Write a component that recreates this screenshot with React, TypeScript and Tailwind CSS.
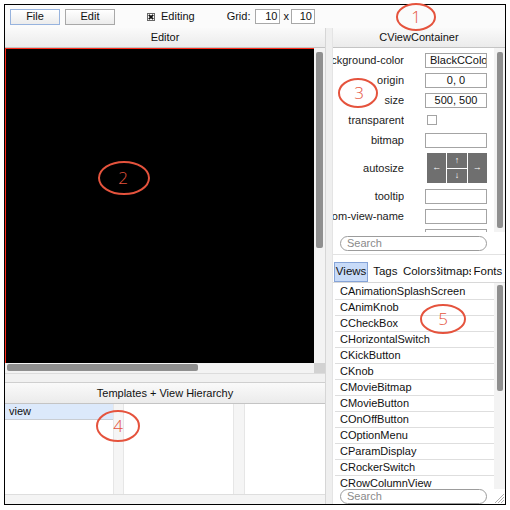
import React from "react";

const views = [
  "CAnimationSplashScreen",
  "CAnimKnob",
  "CCheckBox",
  "CHorizontalSwitch",
  "CKickButton",
  "CKnob",
  "CMovieBitmap",
  "CMovieButton",
  "COnOffButton",
  "COptionMenu",
  "CParamDisplay",
  "CRockerSwitch",
  "CRowColumnView",
];

function Header({ title, h }: { title: string; h: string }) {
  return (
    <div
      className={`${h} shrink-0 flex items-center justify-center bg-gradient-to-b from-[#fafafa] to-[#ebebeb] border-b border-[#c4c4c4] text-[11px] text-[#111]`}
    >
      {title}
    </div>
  );
}

function PropLabel({ text }: { text: string }) {
  return (
    <div className="w-[71px] shrink-0 flex justify-end overflow-hidden whitespace-nowrap text-[11px] text-[#222]">
      <span className="shrink-0">{text}</span>
    </div>
  );
}

function Field({ value, align = "center" }: { value?: string; align?: "center" | "left" }) {
  return (
    <div
      className={`ml-[21px] w-[62px] h-[15px] border border-[#a4a4a4] bg-white overflow-hidden whitespace-nowrap text-[11px] leading-[13px] text-[#111] ${
        align === "center" ? "text-center" : "text-left pl-[4px]"
      }`}
    >
      {value}
    </div>
  );
}

function SearchPill({ w }: { w: string }) {
  return (
    <div
      className={`${w} h-[15px] rounded-full border border-[#9c9c9c] bg-white flex items-center pl-[6px] text-[11px] text-[#8a8a8a]`}
    >
      Search
    </div>
  );
}

export default function App() {
  return (
    <div
      className="relative w-[510px] h-[510px] bg-white overflow-hidden"
      style={{ fontFamily: '"Liberation Sans", Arial, sans-serif' }}
    >
      <div className="ml-[4px] mt-[4px] w-[502px] h-[501px] border border-black flex flex-col bg-white">
        {/* Toolbar */}
        <div className="h-[23px] shrink-0 flex items-center pl-[5px] bg-[#fbfbfb] text-[11px] text-[#111]">
          <div className="w-[50px] h-[16px] border border-[#97b3de] bg-gradient-to-b from-white to-[#ececec] flex items-center justify-center">
            File
          </div>
          <div className="ml-[5px] w-[50px] h-[16px] border border-[#a8a8a8] bg-gradient-to-b from-white to-[#ececec] flex items-center justify-center">
            Edit
          </div>
          <svg className="ml-[32px]" width="8" height="8" viewBox="0 0 8 8">
            <rect x="0.5" y="0.5" width="7" height="7" fill="white" stroke="#666" />
            <path d="M1.8 1.8 L6.2 6.2 M6.2 1.8 L1.8 6.2" stroke="#111" strokeWidth="1.8" />
          </svg>
          <span className="ml-[6px]">Editing</span>
          <span className="ml-[32px]">Grid:</span>
          <div className="ml-[5px] w-[25px] h-[15px] border border-[#a8a8a8] bg-white text-right pr-[2px] leading-[13px]">
            10
          </div>
          <span className="ml-[3px]">x</span>
          <div className="ml-[2px] w-[24px] h-[15px] border border-[#a8a8a8] bg-white text-right pr-[2px] leading-[13px]">
            10
          </div>
        </div>

        {/* Main */}
        <div className="flex-1 flex min-h-0">
          {/* Left panel */}
          <div className="w-[320px] shrink-0 flex flex-col">
            <Header title="Editor" h="h-[20px]" />
            <div className="h-[315px] shrink-0 flex">
              <div className="flex-1 bg-black border-t border-l border-[#ff2a1a]" />
              <div className="w-[11px] shrink-0 bg-[#f3f3f3] pt-[4px] pl-[2px]">
                <div className="w-[7px] h-[196px] bg-[#8f8f8f] rounded-[2px]" />
              </div>
            </div>
            <div className="h-[10px] shrink-0 flex">
              <div className="flex-1 bg-[#f3f3f3] pt-[1px] pl-[2px]">
                <div className="w-[191px] h-[7px] bg-[#8f8f8f] rounded-[2px]" />
              </div>
              <div className="w-[11px] bg-[#d2d2d2]" />
            </div>
            <div className="h-[10px] shrink-0 bg-[#f1f1f1] border-t border-[#dcdcdc] border-b border-b-[#cfcfcf]" />
            <Header title="Templates + View Hierarchy" h="h-[21px]" />
            <div className="flex-1 flex min-h-0">
              <div className="w-[108px] shrink-0 bg-white">
                <div className="h-[16px] bg-[#dce9fb] border-b border-[#c9cdd3] pl-[4px] text-[11px] leading-[15px] text-[#111]">
                  view
                </div>
              </div>
              <div className="w-[11px] shrink-0 bg-[#f5f5f5] border-l border-r border-[#e6e6e6]" />
              <div className="w-[109px] shrink-0 bg-white" />
              <div className="w-[12px] shrink-0 bg-[#f5f5f5] border-l border-r border-[#e6e6e6]" />
              <div className="flex-1 bg-white" />
            </div>
            <div className="h-[10px] shrink-0 bg-[#f4f4f4] border-t border-[#dedede]" />
          </div>

          {/* Vertical splitter */}
          <div className="w-[8px] shrink-0 bg-[#efefef] border-l border-[#d6d6d6] border-r border-r-[#e4e4e4]" />

          {/* Right panel */}
          <div className="flex-1 flex flex-col min-w-0">
            <Header title="CViewContainer" h="h-[20px]" />
            <div className="h-[184px] shrink-0 flex overflow-hidden bg-white">
              <div className="flex-1 pt-[2px] overflow-hidden">
                <div className="h-[20px] flex items-center">
                  <PropLabel text="background-color" />
                  <Field value="BlackCColor" align="left" />
                </div>
                <div className="h-[20px] flex items-center">
                  <PropLabel text="origin" />
                  <Field value="0, 0" />
                </div>
                <div className="h-[20px] flex items-center">
                  <PropLabel text="size" />
                  <Field value="500, 500" />
                </div>
                <div className="h-[20px] flex items-center">
                  <PropLabel text="transparent" />
                  <div className="ml-[23px] w-[10px] h-[10px] border border-[#a4a4a4] bg-white" />
                </div>
                <div className="h-[20px] flex items-center">
                  <PropLabel text="bitmap" />
                  <Field />
                </div>
                <div className="h-[36px] flex items-center">
                  <PropLabel text="autosize" />
                  <div className="ml-[23px] w-[60px] h-[30px] flex gap-[1px] text-white text-[9px]">
                    <div className="flex-1 bg-[#6f6f6f] flex items-center justify-center">←</div>
                    <div className="flex-1 flex flex-col gap-[1px]">
                      <div className="flex-1 bg-[#6f6f6f] flex items-center justify-center">↑</div>
                      <div className="flex-1 bg-[#6f6f6f] flex items-center justify-center">↓</div>
                    </div>
                    <div className="flex-1 bg-[#6f6f6f] flex items-center justify-center">→</div>
                  </div>
                </div>
                <div className="h-[20px] flex items-center">
                  <PropLabel text="tooltip" />
                  <Field />
                </div>
                <div className="h-[20px] flex items-center">
                  <PropLabel text="custom-view-name" />
                  <Field />
                </div>
                <div className="h-[20px] flex items-center">
                  <PropLabel text="sub-controller" />
                  <Field />
                </div>
              </div>
              <div className="w-[11px] shrink-0 bg-[#f3f3f3] pt-[4px] pl-[3px]">
                <div className="w-[6px] h-[176px] bg-[#8f8f8f] rounded-[2px]" />
              </div>
            </div>
            <div className="h-[22px] shrink-0 flex items-center pl-[7px] bg-white">
              <SearchPill w="w-[147px]" />
            </div>
            <div className="h-[8px] shrink-0 bg-white border-t border-[#e2e2e2]" />
            <div className="h-[20px] shrink-0 grid grid-cols-5 pl-[1px] pr-[0px] text-[11.5px] text-[#111] bg-white">
              <div className="flex items-center justify-center bg-[#c8dbf8] border border-[#86a4d8] overflow-hidden whitespace-nowrap">
                Views
              </div>
              <div className="flex items-center justify-center overflow-hidden whitespace-nowrap">Tags</div>
              <div className="flex items-center justify-center overflow-hidden whitespace-nowrap">Colors</div>
              <div className="flex items-center justify-center overflow-hidden whitespace-nowrap">
                <span className="shrink-0">Bitmaps</span>
              </div>
              <div className="flex items-center justify-center overflow-hidden whitespace-nowrap">Fonts</div>
            </div>
            <div className="flex-1 min-h-0 flex overflow-hidden border-t border-[#d8d8d8]">
              <div className="flex-1 pl-[2px] pt-[1px] overflow-hidden">
                {views.map((v) => (
                  <div
                    key={v}
                    className="h-[16px] border-b border-[#dedede] pl-[5px] text-[11px] leading-[15px] text-[#111] whitespace-nowrap"
                  >
                    {v}
                  </div>
                ))}
              </div>
              <div className="w-[11px] shrink-0 bg-[#f3f3f3] pt-[2px] pl-[3px]">
                <div className="w-[6px] h-[106px] bg-[#8f8f8f] rounded-[2px]" />
              </div>
            </div>
            <div className="h-[15px] shrink-0 flex items-start pl-[7px] bg-white relative">
              <SearchPill w="w-[147px]" />
              <svg className="absolute right-[1px] bottom-[1px]" width="10" height="10" viewBox="0 0 10 10">
                <path d="M1 10 L10 1 M4 10 L10 4 M7 10 L10 7" stroke="#9a9a9a" strokeWidth="0.8" />
              </svg>
            </div>
          </div>
        </div>
      </div>

      {/* Annotation overlay */}
      <svg
        className="absolute left-0 top-0 pointer-events-none"
        width="510"
        height="510"
        viewBox="0 0 510 510"
      >
        <g fill="none" stroke="#e5533d" strokeWidth="2">
          <ellipse cx="416" cy="17" rx="19" ry="13" />
          <ellipse cx="124" cy="178" rx="25" ry="16" />
          <ellipse cx="358" cy="93" rx="19" ry="14" />
          <ellipse cx="118" cy="426" rx="21" ry="15" />
          <ellipse cx="443" cy="319" rx="22" ry="14" />
        </g>
        <g
          fill="#e5533d"
          fontSize="17"
          textAnchor="middle"
          style={{ fontFamily: '"Open Sans", "DejaVu Sans", sans-serif', fontWeight: 300 }}
        >
          <text x="416" y="23">1</text>
          <text x="123" y="184">2</text>
          <text x="359" y="99">3</text>
          <text x="118" y="432">4</text>
          <text x="443" y="325">5</text>
        </g>
      </svg>
    </div>
  );
}
